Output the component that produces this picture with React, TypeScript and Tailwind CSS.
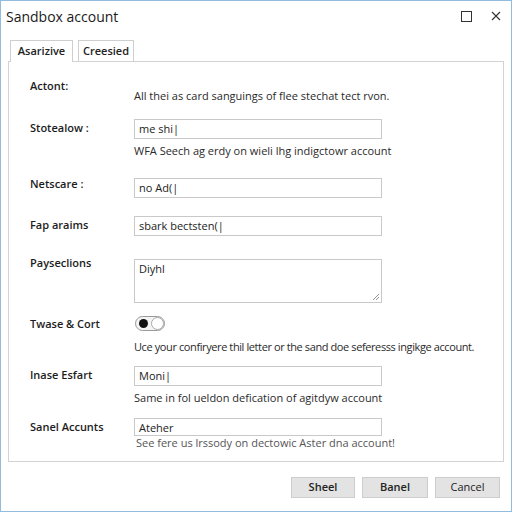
import React from 'react';

const font = { fontFamily: '"Open Sans", "Noto Sans", sans-serif' };

const Field = ({ value }: { value: string }) => (
  <div className="h-[20px] w-[248px] border border-[#c9c9c9] bg-white px-[4px] text-[11px] leading-[18px] text-[#222]">
    {value}
  </div>
);

const Label = ({ children, className = '' }: { children: React.ReactNode; className?: string }) => (
  <div className={`w-[104px] shrink-0 text-[11px] font-semibold leading-[14px] text-[#1c1c1c] ${className}`}>
    {children}
  </div>
);

const Help = ({ children, className = '' }: { children: React.ReactNode; className?: string }) => (
  <div className={`whitespace-nowrap text-[11px] leading-[14px] text-[#2a2a2a] ${className}`}>{children}</div>
);

export default function App() {
  return (
    <div
      className="flex h-[512px] w-[512px] flex-col border border-[#93bbdd] bg-white"
      style={font}
    >
      {/* title bar */}
      <div className="flex h-[30px] shrink-0 items-center pl-[5px] pr-[10px]">
        <span className="text-[14px] text-[#1a1a1a]">Sandbox account</span>
        <div className="ml-auto flex items-center gap-[19px]">
          <div className="h-[11px] w-[11px] border border-[#333]" />
          <svg width="10" height="10" viewBox="0 0 10 10">
            <path d="M1 1 L9 9 M9 1 L1 9" stroke="#333" strokeWidth="1.1" />
          </svg>
        </div>
      </div>

      {/* tabs */}
      <div className="mt-[8px] flex h-[22px] shrink-0 items-end gap-[5px] pl-[9px]">
        <div className="relative z-10 -mb-px flex h-[22px] w-[63px] items-center justify-center border border-b-0 border-[#cfcfcf] bg-white text-[11px] font-semibold text-[#222]">
          Asarizive
        </div>
        <div className="flex h-[21px] w-[56px] items-center justify-center border border-b-0 border-[#cfcfcf] bg-white text-[11px] font-semibold text-[#222]">
          Creesied
        </div>
      </div>

      {/* panel */}
      <div className="ml-[7px] h-[401px] w-[496px] shrink-0 border border-[#d3d3d3] pl-[21px] pt-[17px]">
        <div className="flex">
          <Label>Actont:</Label>
          <Help className="mt-[10px]">All thei as card sanguings of flee stechat tect rvon.</Help>
        </div>

        <div className="mt-[16px] flex">
          <Label className="pt-[2px]">Stotealow :</Label>
          <div>
            <Field value="me shi|" />
            <Help className="mt-[5px]">WFA Seech ag erdy on wieli lhg indigctowr account</Help>
          </div>
        </div>

        <div className="mt-[20px] flex">
          <Label className="-mt-[1px]">Netscare :</Label>
          <Field value="no Ad(|" />
        </div>

        <div className="mt-[18px] flex">
          <Label className="pt-[2px]">Fap araims</Label>
          <Field value="sbark bectsten(|" />
        </div>

        <div className="mt-[23px] flex">
          <Label className="-mt-[3px]">Payseclions</Label>
          <div className="relative h-[44px] w-[248px] border border-[#c9c9c9] bg-white px-[4px] pt-[2px] text-[11px] leading-[14px] text-[#222]">
            Diyhl
            <svg className="absolute bottom-[1px] right-[1px]" width="8" height="8" viewBox="0 0 8 8">
              <path d="M7 1 L1 7 M7 4 L4 7" stroke="#888" strokeWidth="0.9" />
            </svg>
          </div>
        </div>

        <div className="mt-[13px] flex">
          <Label className="pt-[1px]">Twase &amp; Cort</Label>
          <div className="pl-[1px]">
            <div className="relative h-[15px] w-[30px] rounded-full border border-[#9a9a9a] bg-[#f4f4f4]">
              <div className="absolute left-[3px] top-[2px] h-[9px] w-[9px] rounded-full bg-[#111]" />
              <div className="absolute right-[0px] top-[0px] h-[13px] w-[13px] rounded-full border border-[#aaa] bg-white" />
            </div>
          </div>
        </div>
        <div className="flex">
          <div className="w-[104px] shrink-0" />
          <Help className="mt-[9px] tracking-[-0.4px]">Uce your confiryere thil letter or the sand doe seferesss ingikge account.</Help>
        </div>

        <div className="mt-[12px] flex">
          <Label className="pt-[2px]">Inase Esfart</Label>
          <div>
            <Field value="Moni|" />
            <Help className="mt-[5px]">Same in fol ueldon defication of agitdyw account</Help>
          </div>
        </div>

        <div className="mt-[13px] flex">
          <Label className="pt-[2px]">Sanel Accunts</Label>
          <div>
            <div className="h-[18px] w-[248px] border border-[#c9c9c9] bg-white px-[4px] text-[11px] leading-[17px] text-[#222]">
              Ateher
            </div>
            <Help className="pl-[2px] text-[#555]">See fere us lrssody on dectowic Aster dna account!</Help>
          </div>
        </div>
      </div>

      {/* buttons */}
      <div className="mt-[15px] flex justify-end gap-[7px] pr-[11px]">
        <button className="h-[21px] w-[64px] border border-[#cdcdcd] bg-[#e3e3e3] text-[11px] font-semibold text-[#222]">
          Sheel
        </button>
        <button className="h-[21px] w-[66px] border border-[#cdcdcd] bg-[#e3e3e3] text-[11px] font-semibold text-[#222]">
          Banel
        </button>
        <button className="h-[21px] w-[65px] border border-[#cdcdcd] bg-[#e3e3e3] text-[11px] text-[#222]">
          Cancel
        </button>
      </div>
    </div>
  );
}
